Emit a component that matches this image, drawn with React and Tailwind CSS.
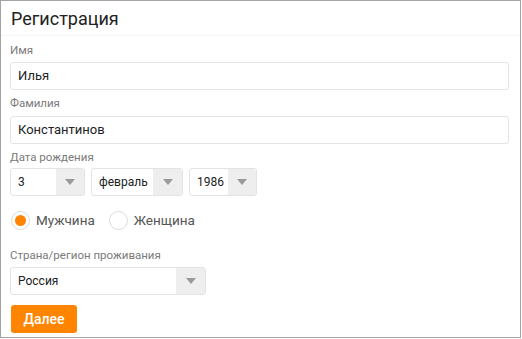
import React from "react";

function Arrow() {
  return (
    <svg width="10" height="6" viewBox="0 0 10 6">
      <path d="M0 0 L10 0 L5 6 Z" fill="#9a9a9a" />
    </svg>
  );
}

function Select({ value, width, arrowW = 28 }) {
  return (
    <div
      className="flex h-[28px] rounded-[3px] border border-[#e3e3e3] bg-white overflow-hidden"
      style={{ width }}
    >
      <div className="flex-1 flex items-center pl-[7px] text-[12px] text-[#222]">{value}</div>
      <div
        className="flex items-center justify-center bg-[#eeeeee]"
        style={{ width: arrowW }}
      >
        <Arrow />
      </div>
    </div>
  );
}

function Label({ children }) {
  return <div className="h-[16px] leading-[16px] text-[11.5px] text-[#7a7a7a]">{children}</div>;
}

function Input({ value }) {
  return (
    <div className="h-[28px] w-[499px] rounded-[3px] border border-[#e3e3e3] bg-white flex items-center pl-[7px] text-[13px] text-[#222]">
      {value}
    </div>
  );
}

function Radio({ checked, label }) {
  return (
    <div className="flex items-center">
      <div className="w-[19px] h-[19px] rounded-full border border-[#dcdcdc] flex items-center justify-center">
        {checked && <div className="w-[11px] h-[11px] rounded-full bg-[#ff8400]" />}
      </div>
      <span className="ml-[6px] text-[13.5px] text-[#555]">{label}</span>
    </div>
  );
}

export default function App() {
  return (
    <div
      className="w-[521px] h-[338px] border border-[#a3a3a3] bg-white"
      style={{ fontFamily: "Roboto, 'Liberation Sans', sans-serif" }}
    >
      <div className="h-[35px] border-b border-[#f3f3f3] flex items-center pl-[10px] text-[18px] text-[#222]">
        Регистрация
      </div>
      <div className="pl-[9px] pt-[6px]">
        <Label>Имя</Label>
        <div className="mt-[4px]">
          <Input value="Илья" />
        </div>
        <div className="mt-[5px]">
          <Label>Фамилия</Label>
        </div>
        <div className="mt-[5px]">
          <Input value="Константинов" />
        </div>
        <div className="mt-[5px]">
          <Label>Дата рождения</Label>
        </div>
        <div className="mt-[3px] flex gap-[6px]">
          <Select value="3" width={75} />
          <Select value="февраль" width={92} arrowW={29} />
          <Select value="1986" width={68} />
        </div>
        <div className="mt-[14px] flex items-center pl-[1px] gap-[14px]">
          <Radio checked label="Мужчина" />
          <Radio label="Женщина" />
        </div>
        <div className="mt-[17px]">
          <Label>Страна/регион проживания</Label>
        </div>
        <div className="mt-[4px]">
          <Select value="Россия" width={196} arrowW={29} />
        </div>
        <div className="mt-[10px] pl-[1px]">
          <button className="h-[28px] w-[66px] rounded-[3px] bg-[#ff8400] text-white text-[14px] font-medium">
            Далее
          </button>
        </div>
      </div>
    </div>
  );
}
